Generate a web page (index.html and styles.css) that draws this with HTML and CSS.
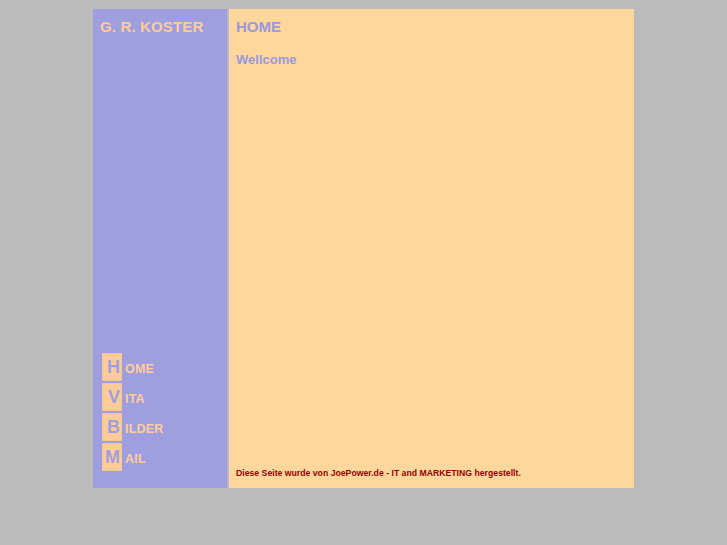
FILE: index.html
```
<!DOCTYPE html>
<html>
<head>
<meta charset="utf-8">
<link rel="stylesheet" href="styles.css">
</head>
<body>
<div class="frame">
  <div class="side">
    <div class="brand">G. R. KOSTER</div>
    <ul class="nav">
      <li><span class="cap">H</span><span class="rest">OME</span></li>
      <li><span class="cap">V</span><span class="rest">ITA</span></li>
      <li><span class="cap">B</span><span class="rest">ILDER</span></li>
      <li><span class="cap">M</span><span class="rest">AIL</span></li>
    </ul>
  </div>
  <div class="main">
    <h1 class="title">HOME</h1>
    <p class="welcome">Wellcome</p>
    <p class="footer">Diese Seite wurde von JoePower.de - IT and MARKETING hergestellt.</p>
  </div>
</div>
</body>
</html>
```
FILE: styles.css
```
html, body {
  margin: 0;
  padding: 0;
  background: #bbbbbb;
  font-family: "Liberation Sans", Arial, sans-serif;
}
body {
  padding-top: 9px;
}
.frame {
  width: 541px;
  height: 479px;
  margin: 0 auto;
  display: flex;
  gap: 2px;
  background: #b9b6cc;
}
.side {
  width: 134px;
  background: #9f9fdf;
  display: flex;
  flex-direction: column;
  padding: 9px 0 17px 7px;
  box-sizing: border-box;
}
.brand {
  color: #ffcc99;
  font-weight: bold;
  font-size: 15px;
  line-height: 17px;
  letter-spacing: 0.15px;
}
.nav {
  list-style: none;
  margin: auto 0 0 2px;
  padding: 0;
  display: flex;
  flex-direction: column;
  gap: 2px;
}
.nav li {
  display: flex;
  align-items: baseline;
  gap: 3px;
}
.cap {
  width: 20px;
  height: 28px;
  box-sizing: border-box;
  background: #ffcc99;
  border: 1px solid #f4c894;
  color: #9f9fdf;
  font-weight: bold;
  font-size: 18px;
  line-height: 26px;
  text-align: right;
  padding-right: 1px;
}
.rest {
  color: #ffcc99;
  font-weight: bold;
  font-size: 12.5px;
  letter-spacing: 0.2px;
}
.main {
  flex: 1;
  background: #ffd69c;
  display: flex;
  flex-direction: column;
  padding: 9px 7px 10px 7px;
  box-sizing: border-box;
}
.title {
  margin: 0;
  color: #9999dd;
  font-weight: bold;
  font-size: 15px;
  line-height: 17px;
}
.welcome {
  margin: 17px 0 0 0;
  color: #9999dd;
  font-weight: bold;
  font-size: 13px;
  line-height: 15px;
}
.footer {
  margin: auto 0 0 0;
  color: #990000;
  font-weight: bold;
  font-size: 8.7px;
  line-height: 10px;
}
```
